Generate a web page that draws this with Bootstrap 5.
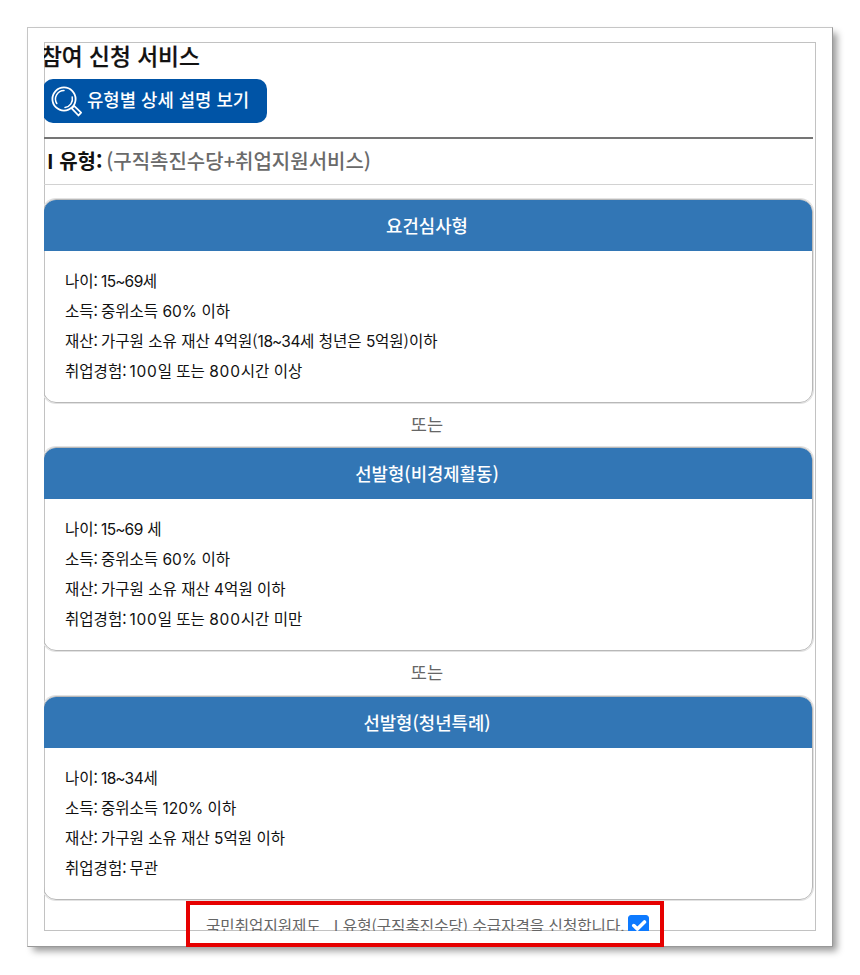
<!DOCTYPE html>
<html lang="ko">
<head>
<meta charset="utf-8">
<meta name="viewport" content="width=device-width, initial-scale=1">
<title>참여 신청 서비스</title>
<link href="https://cdn.jsdelivr.net/npm/bootstrap@5.3.0/dist/css/bootstrap.min.css" rel="stylesheet">
<style>
body{font-family:"Noto Sans CJK KR",sans-serif;color:#111;width:860px;height:975px;overflow:hidden;padding:27px}
.sheet{width:806px;height:920px;padding:14px 16px;border:1px solid #c6c6c6;border-right-color:#999;border-bottom-color:#999;box-shadow:5px 5px 7px -1px rgba(0,0,0,.4);background:#fff}
.viewport-pane{width:772px;height:889px;box-shadow:inset 0 0 0 1px #c2c2c2}
.page-title{font-size:22.7px;line-height:28px;font-weight:500;height:37px;text-indent:-3px;-webkit-text-stroke:.25px #111}
.btn-detail{width:224px;height:44px;margin-left:-1px;background:#0054a6;border-radius:10px;font-size:17.8px;font-weight:500;line-height:27px;padding:0 0 4px 8px;gap:4px}
.btn-detail svg{margin-top:4px}
.type-row{width:769px;height:48px;margin-top:14px;border-top:2px solid #757575;border-bottom:1px solid #d2d2d2;font-size:20px;line-height:43px;padding-left:3px;font-weight:500;color:#6a6a6a}
.type-row b{color:#111;margin-right:-2px}
.type-card{width:770px;height:204px;margin-left:-1px;border:1px solid #b8b8b8;box-shadow:0 0 0 1px #e2e2e2;border-radius:13px;overflow:hidden}
.type-row + .type-card{margin-top:14px}
.type-card h2{height:51px;line-height:51px;font-size:17.8px;font-weight:500;background:#3276b5;padding-right:2px}
.conds{font-size:15.55px;line-height:30px;padding:14px 21px}
.conds div{height:30px}
.num{font-family:Inter,sans-serif;font-size:15.5px;line-height:1}
.num.wide{letter-spacing:.75px}
.num.tight{letter-spacing:-.4px}
.tld{letter-spacing:-1px;margin-left:-.7px}
.cl{letter-spacing:-.7px}
.or-row{width:766px;height:44px;line-height:42px;font-size:17.6px;color:#666}
.or-row + .type-card + .or-row{height:44.5px}
.apply-row{width:769px;height:50px;font-size:15.6px;color:#666;line-height:24px;padding:13px 0 0 162px}
.apply-row .form-check-input{width:21px;height:21px;margin:2px 0 0 3px;border-radius:3px;background-color:#0d7aff;border-color:#0d7aff;background-size:125%}
.highlight-box{left:186px;top:901px;width:478px;height:46px;border:4px solid #e60000}
</style>
<script src="https://cdn.jsdelivr.net/npm/bootstrap@5.3.0/dist/js/bootstrap.bundle.min.js"></script>
</head>
<body class="bg-white position-relative">
<main class="sheet">
  <div class="viewport-pane overflow-hidden">
    <h1 class="page-title mb-0">참여 신청 서비스</h1>
    <button class="btn-detail border-0 text-white d-flex align-items-center" type="button">
      <svg width="32" height="34" viewBox="0 0 32 34" fill="none" stroke="#fff" stroke-width="1.8"><circle cx="13" cy="15" r="11.6"/><path d="M5.8 19.5A8.5 8.5 0 0 1 13 6.5M21.2 13A8.5 8.5 0 0 1 14 23.4" stroke-width="1.5" stroke-linecap="round"/><path d="M20.7 24.3l2.4-2.4 7 6.8-2.6 2.8z" stroke-linejoin="round"/></svg>
      <span>유형별 상세 설명 보기</span>
    </button>
    <div class="type-row"><b>I 유형:</b> <span>(구직촉진수당+취업지원서비스)</span></div>
    <section class="type-card">
      <h2 class="text-white text-center mb-0">요건심사형</h2>
      <div class="conds"><div>나이<span class="cl">: </span><span class="num tight">15<span class="tld">~</span>69</span>세</div><div>소득<span class="cl">: </span>중위소득 <span class="num">60%</span> 이하</div><div>재산<span class="cl">: </span>가구원 소유 재산 <span class="num tight">4</span>억원(<span class="num tight">18<span class="tld">~</span>34</span>세 청년은 <span class="num tight">5</span>억원)이하</div><div>취업경험<span class="cl">: </span><span class="num wide">100</span>일 또는 <span class="num wide">800</span>시간 이상</div></div>
    </section>
    <div class="or-row text-center">또는</div>
    <section class="type-card">
      <h2 class="text-white text-center mb-0">선발형(비경제활동)</h2>
      <div class="conds"><div>나이<span class="cl">: </span><span class="num tight">15<span class="tld">~</span>69</span> 세</div><div>소득<span class="cl">: </span>중위소득 <span class="num">60%</span> 이하</div><div>재산<span class="cl">: </span>가구원 소유 재산 <span class="num">4</span>억원 이하</div><div>취업경험<span class="cl">: </span><span class="num wide">100</span>일 또는 <span class="num wide">800</span>시간 미만</div></div>
    </section>
    <div class="or-row text-center">또는</div>
    <section class="type-card">
      <h2 class="text-white text-center mb-0">선발형(청년특례)</h2>
      <div class="conds"><div>나이<span class="cl">: </span><span class="num tight">18<span class="tld">~</span>34</span>세</div><div>소득<span class="cl">: </span>중위소득 <span class="num">120%</span> 이하</div><div>재산<span class="cl">: </span>가구원 소유 재산 <span class="num">5</span>억원 이하</div><div>취업경험<span class="cl">: </span>무관</div></div>
    </section>
    <label class="apply-row d-flex text-nowrap"><span>국민취업지원제도 &nbsp; I 유형(구직촉진수당) 수급자격을 신청합니다.</span><input class="form-check-input flex-shrink-0" type="checkbox" checked></label>
  </div>
</main>
<div class="highlight-box position-absolute"></div>
</body>
</html>
